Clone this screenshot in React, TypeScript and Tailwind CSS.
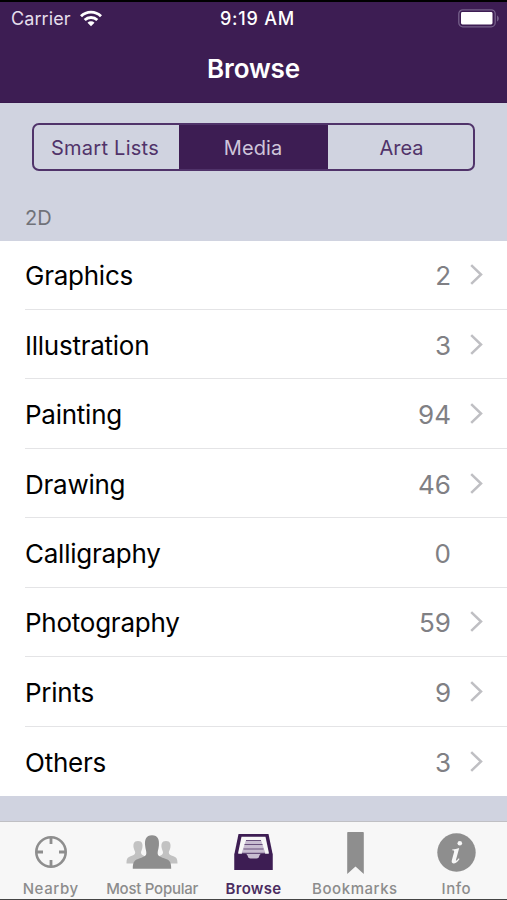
import type { ReactNode } from 'react';

const segments = [
  { label: 'Smart Lists', className: 'w-[145px] pr-[3px] tracking-[0.25px]' },
  { label: 'Media', className: 'w-[149px] bg-[#3d1d53] pr-px text-[#cfc5da] tracking-[0.1px]' },
  { label: 'Area', className: 'flex-1 pl-[2px] tracking-[0px]' },
];

const rows = [
  { name: 'Graphics', count: 2 },
  { name: 'Illustration', count: 3 },
  { name: 'Painting', count: 94 },
  { name: 'Drawing', count: 46 },
  { name: 'Calligraphy', count: 0 },
  { name: 'Photography', count: 59 },
  { name: 'Prints', count: 9 },
  { name: 'Others', count: 3 },
];

function WifiIcon() {
  return (
    <svg width="22" height="17" viewBox="0 0 22 17" fill="none" stroke="#fff" strokeWidth="2.9">
      <path d="M1 6.2a14.2 14.2 0 0 1 20 0" />
      <path d="M4.7 10a9 9 0 0 1 12.6 0" />
      <path d="M11 16.2 7.5 12.7a5 5 0 0 1 7 0z" fill="#fff" stroke="none" />
    </svg>
  );
}

function BatteryIcon() {
  return (
    <svg width="42" height="19" viewBox="0 0 42 19">
      <rect x="0.8" y="0.8" width="36.4" height="17" rx="4" fill="none" stroke="#75608a" strokeWidth="1.3" />
      <rect x="3" y="3" width="31.5" height="12.4" rx="1.4" fill="#fff" />
      <path d="M39 6.4c2.4 1 2.4 5 0 6z" fill="#75608a" />
    </svg>
  );
}

function Chevron() {
  return (
    <svg width="13" height="21" viewBox="0 0 13 21" fill="none" stroke="#bfbfc3" strokeWidth="2.5">
      <path d="M1.2 1.2 11 10.5 1.2 19.8" />
    </svg>
  );
}

function NearbyIcon() {
  return (
    <svg width="34" height="34" viewBox="0 0 34 34" fill="none" stroke="#8e8e8e" strokeWidth="2.6">
      <circle cx="17" cy="17" r="14.7" />
      <path d="M17 3v6M17 25v6M3 17h6M25 17h6" strokeWidth="2.8" />
    </svg>
  );
}

function PeopleIcon() {
  return (
    <svg width="52" height="34" viewBox="0 0 52 34">
      <g fill="#c2c2c2">
        <path d="M.5 28.500c0-4.500 1-6.200 4-7.200 3.200-1 4.700-1.800 4.700-3.800 0-1.500-1.200-2.500-1.500-4.500C7 9.500 7.500 6 12 6s5 3.500 4.300 7c-.3 2-1.300 3-1.300 4.500 0 2 1.500 2.800 4 3.800v7.200z" />
        <path d="M51.500 28.500c0-4.500-1-6.200-4-7.200-3.200-1-4.700-1.800-4.700-3.800 0-1.500 1.200-2.500 1.500-4.500.7-3.500.2-7-4.300-7s-5 3.500-4.300 7c.3 2 1.300 3 1.300 4.500 0 2-1.500 2.800-4 3.800v7.200z" />
      </g>
      <path
        d="M6.800 33.800c0-6 1-8.300 5.200-9.800 5.500-1.900 8-2.800 8.300-5.200.3-2.300-.8-4.300-1.200-8.300C18.500 4.500 20 .2 26 .2s7.500 4.300 6.900 10.300c-.4 4-1.500 6-1.200 8.300.3 2.400 2.800 3.300 8.300 5.200 4.200 1.500 5.200 3.800 5.200 9.800z"
        fill="#8e8e8e"
      />
    </svg>
  );
}

function TrayIcon() {
  return (
    <svg width="39" height="36" viewBox="0 0 39 36">
      <path d="M4.500 0h30L38.500 19.500V36H.5V19.500z" fill="#3d1d53" />
      <path d="M7.500 2.800h24L35 19.500 29 23H10L4 19.500z" fill="#f7f7f7" />
      <path d="M12 6h15l4.500 13.500L26 25H13L7.500 19.500z" fill="#c8bdd1" />
      <path d="M12 6.500h15M10.500 10.500h18M9.500 15h20M8 19.300h23" stroke="#69517d" strokeWidth="1.200" />
      <path d="M.5 19.800h10.700c1.600 0 2.100 1 2.600 2.500.4 1.400 1.200 2.200 2.700 2.200h6c1.500 0 2.300-.8 2.700-2.200.5-1.500 1-2.500 2.600-2.500h10.700V36H.5z" fill="#3d1d53" />
    </svg>
  );
}

function BookmarkIcon() {
  return (
    <svg className="mt-[2px] ml-[2px]" width="17" height="43" viewBox="0 0 17 43">
      <path d="M1 0h15a.8.8 0 0 1 .8.800V42l-8.300-7.500L.2 42V.8A.8.800 0 0 1 1 0z" fill="#8e8e8e" />
    </svg>
  );
}

function InfoIcon() {
  return (
    <svg width="39" height="39" viewBox="0 0 39 39">
      <circle cx="19.500" cy="19.500" r="19.200" fill="#8e8e8e" />
      <circle cx="22.800" cy="10.300" r="2.300" fill="#f7f7f7" />
      <path
        d="M15.200 16.500c2.700-.2 4.700-.7 7-1.500l-3.200 11.800c-.4 1.500.5 1.300 2.800-1.500l.7.600c-2.400 3.600-4.200 4.600-6 4.500-1.900-.2-2.100-1.700-1.600-3.500l2.200-8c.3-1.200-.2-1.500-2-1.600z"
        fill="#f7f7f7"
      />
    </svg>
  );
}

function Tab({ label, active, tracking, children }: { label: string; active?: boolean; tracking: string; children: ReactNode }) {
  return (
    <div className="flex flex-1 basis-0 flex-col items-center">
      <div className="flex h-[58px] items-center justify-center pt-[2px]">{children}</div>
      <span
        className={`whitespace-nowrap text-[15px] leading-[18px] ${tracking} ${
          active ? 'font-semibold text-[#4a2c60]' : 'font-medium text-[#8c8c8c]'
        }`}
      >
        {label}
      </span>
    </div>
  );
}

export default function App() {
  return (
    <div className="flex h-[900px] w-[507px] flex-col overflow-hidden border-t-2 border-b border-t-black border-b-[#444] bg-[#d0d3e0] font-['Inter','Liberation_Sans',sans-serif]">
      <header className="h-[101px] shrink-0 border-b border-[#38184e] bg-[#3d1d53] text-white">
        <div className="grid h-[32px] grid-cols-3 items-center pr-[7px] pl-[11px]">
          <div className="flex items-center gap-[9px]">
            <span className="text-[18px] tracking-[0.1px] text-[#e6deeb]">Carrier</span>
            <WifiIcon />
          </div>
          <span className="pl-1 text-center text-[18px] font-medium tracking-[0.8px] whitespace-nowrap">9:19 AM</span>
          <div className="flex justify-end">
            <BatteryIcon />
          </div>
        </div>
        <h1 className="pt-[17px] text-center text-[26px] leading-[36px] font-semibold tracking-[-0.150px]">Browse</h1>
      </header>

      <div className="h-[137.500px] shrink-0 px-[32px] pt-[20px]">
        <div className="flex h-[48px] w-[443px] overflow-hidden rounded-[7px] border-2 border-[#50336a] text-[20px] text-[#50336a]">
          {segments.map((segment) => (
            <div key={segment.label} className={`flex items-center justify-center pt-px ${segment.className}`}>
              {segment.label}
            </div>
          ))}
        </div>
        <div className="-ml-[7px] pt-[35px] text-[20px] leading-[24px] text-[#717279]">2D</div>
      </div>

      <ul className="shrink-0 bg-white">
        {rows.map((row, i) => (
          <li key={row.name} className="flex h-[69.450px] pl-[25px]">
            <div
              className={`flex flex-1 items-center pr-[24px] text-[26px] ${
                i < rows.length - 1 ? 'border-b-[1.500px] border-[#e4e4e6]' : ''
              }`}
            >
              <span className="flex-1 pt-[2px] tracking-[-0.25px] text-black">{row.name}</span>
              <span className="pt-[2px] text-[#808084]">{row.count}</span>
              <span className="ml-[19px] flex w-[13px]">{row.count > 0 && <Chevron />}</span>
            </div>
          </li>
        ))}
      </ul>

      <nav className="mt-auto flex h-[78px] shrink-0 border-t border-[#c0c0c4] bg-[#f7f7f7]">
        <Tab label="Nearby" tracking="tracking-[0.6px]">
          <NearbyIcon />
        </Tab>
        <Tab label="Most Popular" tracking="tracking-[-0.25px]">
          <PeopleIcon />
        </Tab>
        <Tab label="Browse" tracking="tracking-[0.3px]" active>
          <TrayIcon />
        </Tab>
        <Tab label="Bookmarks" tracking="tracking-[0.55px]">
          <BookmarkIcon />
        </Tab>
        <Tab label="Info" tracking="tracking-[0.5px]">
          <InfoIcon />
        </Tab>
      </nav>
    </div>
  );
}
